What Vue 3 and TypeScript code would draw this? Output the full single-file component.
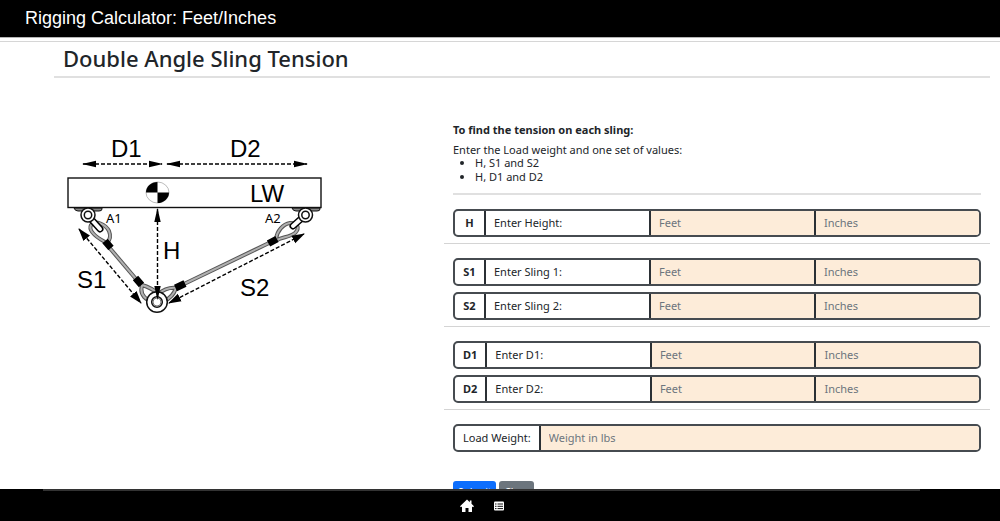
<script setup lang="ts">
import { reactive, ref } from 'vue'

interface Dimension {
  code: string
  label: string
  feet: string
  inches: string
}

const groups = reactive<Dimension[][]>([
  [{ code: 'H', label: 'Enter Height:', feet: '', inches: '' }],
  [
    { code: 'S1', label: 'Enter Sling 1:', feet: '', inches: '' },
    { code: 'S2', label: 'Enter Sling 2:', feet: '', inches: '' },
  ],
  [
    { code: 'D1', label: 'Enter D1:', feet: '', inches: '' },
    { code: 'D2', label: 'Enter D2:', feet: '', inches: '' },
  ],
])
const weight = ref('')

function clearAll() {
  groups.flat().forEach((d) => {
    d.feet = ''
    d.inches = ''
  })
  weight.value = ''
}
</script>

<template>
  <div class="app">
    <header class="topbar">Rigging Calculator: Feet/Inches</header>

    <main class="content">
      <div class="page">
        <h1 class="title">Double Angle Sling Tension</h1>
        <div class="columns">
          <div class="figure">
            <svg class="diagram" viewBox="60 130 270 190" role="img" aria-label="Double angle sling diagram">
              <defs>
                <marker id="arrow" markerUnits="userSpaceOnUse" markerWidth="14" markerHeight="8" refX="13" refY="4" orient="auto-start-reverse">
                  <path d="M0 0.8L14 4L0 7.2z" fill="#000" />
                </marker>
                <marker id="arrow-wide" markerUnits="userSpaceOnUse" markerWidth="13" markerHeight="10" refX="12" refY="5" orient="auto-start-reverse">
                  <path d="M0 0.8L13 5L0 9.2z" fill="#000" />
                </marker>
              </defs>

              <g class="plate">
                <path d="M74 208h28v1q0 2-3 2H78q-3 0-4-3z" />
                <path d="M292 208h28v1q0 2-3 2h-21q-3 0-4-3z" />
              </g>
              <rect class="beam" x="68" y="178" width="253" height="29.5" />
              <ellipse cx="157.500" cy="192.500" rx="11.500" ry="10.500" fill="#fff" stroke="#aaa" stroke-width="0.800" />
              <path d="M157.500 192.500V182a11.500 10.500 0 0 0-11.500 10.500zM157.500 192.500V203a11.500 10.500 0 0 0 11.500-10.500z" />

              <!-- wire rope legs -->
              <path class="rope" d="M108 246L136 279" />
              <path class="rope-core" d="M108 246L136 279" />
              <path class="rope" d="M184 284L269 243" />
              <path class="rope-core" d="M184 284L269 243" />
              <!-- eye loops -->
              <path class="loop" d="M105 242C96 237 88 231 91 225C95 219 106 225 109 231C111 236 110 240 107 243" />
              <path class="loop-core" d="M105 242C96 237 88 231 91 225C95 219 106 225 109 231C111 236 110 240 107 243" />
              <path class="loop" d="M276 239C277 231 283 224 290 223C298 223 300 228 295 233C290 237 283 237 277 240" />
              <path class="loop-core" d="M276 239C277 231 283 224 290 223C298 223 300 228 295 233C290 237 283 237 277 240" />
              <path class="loop" d="M142 285C140 292 143 297 148 300M142 285C149 287 154 290 159 294" />
              <path class="loop-core" d="M142 285C140 292 143 297 148 300M142 285C149 287 154 290 159 294" />
              <path class="loop" d="M176 288C170 287 161 290 156 296M176 288C174 294 169 299 164 301" />
              <path class="loop-core" d="M176 288C170 287 161 290 156 296M176 288C174 294 169 299 164 301" />
              <!-- ferrules -->
              <path class="ferrule" d="M105 241L111 248M135.500 278L141.500 285M175.500 288L185 283.500M268.500 243.500L277 239" />

              <!-- shackles -->
              <path class="pin-edge" d="M91 219L100 229" />
              <path class="pin" d="M91 219L100 229" />
              <path class="pin-edge" d="M302 218L293 226" />
              <path class="pin" d="M302 218L293 226" />
              <circle class="ring" cx="88" cy="215" r="7" />
              <circle class="ring" cx="88" cy="215" r="3.700" />
              <circle class="ring" cx="305.500" cy="215" r="7" />
              <circle class="ring" cx="305.500" cy="215" r="3.700" />
              <circle class="ring" cx="157" cy="302" r="10.300" />
              <circle class="ring" cx="157" cy="302" r="5.300" />
              <circle class="ring-inner" cx="157" cy="302" r="4" />

              <!-- measurements -->
              <g class="dash">
                <path d="M83 164H162" marker-start="url(#arrow)" marker-end="url(#arrow)" />
                <path d="M167 164H307" marker-start="url(#arrow)" marker-end="url(#arrow)" />
                <path d="M157.500 209V299" marker-start="url(#arrow)" marker-end="url(#arrow)" />
                <path d="M79 229L141 303" marker-start="url(#arrow-wide)" marker-end="url(#arrow-wide)" />
                <path d="M169 303L304 234" marker-start="url(#arrow-wide)" marker-end="url(#arrow-wide)" />
              </g>

              <g class="mark">
                <text x="111" y="157">D1</text>
                <text x="230" y="157">D2</text>
                <text x="250" y="202">LW</text>
                <text x="163" y="259">H</text>
                <text x="77" y="288">S1</text>
                <text x="240" y="296">S2</text>
              </g>
              <g class="mark-small">
                <text x="106" y="223">A1</text>
                <text x="265" y="223">A2</text>
              </g>
            </svg>
          </div>

          <form class="form" @submit.prevent>
            <section class="intro">
              <h2>To find the tension on each sling:</h2>
              <p>Enter the Load weight and one set of values:</p>
              <ul>
                <li>H, S1 and S2</li>
                <li>H, D1 and D2</li>
              </ul>
            </section>

            <section v-for="(group, i) in groups" :key="i" class="group">
              <div v-for="d in group" :key="d.code" class="field">
                <strong class="code">{{ d.code }}</strong>
                <label class="name" :for="'feet-' + d.code">{{ d.label }}</label>
                <input :id="'feet-' + d.code" v-model="d.feet" type="text" placeholder="Feet" />
                <input v-model="d.inches" type="text" placeholder="Inches" :aria-label="d.code + ' inches'" />
              </div>
            </section>

            <section class="group last">
              <div class="field">
                <label class="code" for="weight">Load Weight:</label>
                <input id="weight" v-model="weight" type="text" placeholder="Weight in lbs" />
              </div>
            </section>

            <div class="actions">
              <button class="primary" type="submit">Submit</button>
              <button class="secondary" type="button" @click="clearAll">Clear</button>
            </div>
          </form>
        </div>
      </div>
    </main>

    <footer class="bottombar">
      <div class="track"></div>
      <nav class="nav">
        <a href="#home" aria-label="Home">
          <svg width="14" height="14" viewBox="0 0 14 14"><path d="M7 0.500L0 7.200L1 8.200L2 7.500V13H5.500V9H8.500V13H12V7.500L13 8.200L14 7.200L11.500 4.800V1.500H9.800V3.200z" fill="#fff" /></svg>
        </a>
        <a href="#list" aria-label="List">
          <svg width="14" height="14" viewBox="0 0 14 14"><rect x="2" y="2.500" width="10" height="9" rx="1" fill="#fff" /><path d="M3 5h1.500M5.500 5H11M3 7.300h1.500M5.500 7.300H11M3 9.600h1.500M5.500 9.600H11" stroke="#111" stroke-width="1" /></svg>
        </a>
      </nav>
    </footer>
  </div>
</template>

<style>
body {
  margin: 0;
}
</style>

<style scoped>
* {
  box-sizing: border-box;
}
.app {
  display: flex;
  flex-direction: column;
  height: 100vh;
  background: #fff;
  color: #212529;
  font: 11px/14px "Noto Sans", "Open Sans", sans-serif;
}
.topbar {
  flex: none;
  padding: 8px 25px 9px;
  background: #000;
  color: #fff;
  font: 18px/20px "Liberation Sans", Arial, sans-serif;
}
.content {
  flex: 1;
  min-height: 0;
  overflow: hidden auto;
  scrollbar-width: none;
  border-top: 1px solid #b5b5b5;
}
.page {
  margin-top: 3px;
  padding: 0 10px 20px 54px;
  border-top: 1px solid #d6d6d6;
}
.title {
  margin: 0;
  padding: 0 9px 2px;
  border-bottom: 2px solid #e0e0e0;
  font-size: 22px;
  font-weight: 500;
  line-height: 32px;
}
.columns {
  display: grid;
  grid-template-columns: minmax(0, 5fr) minmax(0, 7fr);
}
.figure {
  padding: 52px 6px 0;
}
.diagram {
  display: block;
  width: 100%;
  max-width: 270px;
}
.beam {
  fill: #fff;
  stroke: #111;
  stroke-width: 1.4px;
}
.plate {
  fill: #888;
  stroke: #111;
}
.rope,
.loop {
  fill: none;
  stroke: #555;
  stroke-width: 4px;
}
.rope-core,
.loop-core {
  fill: none;
  stroke: #b0b0b0;
  stroke-width: 2px;
}
.ferrule {
  fill: none;
  stroke: #000;
  stroke-width: 7px;
}
.pin-edge {
  stroke: #000;
  stroke-width: 7px;
  stroke-linecap: round;
}
.pin {
  stroke: #fff;
  stroke-width: 4px;
  stroke-linecap: round;
}
.ring {
  fill: #fff;
  stroke: #111;
  stroke-width: 1.5px;
}
.ring-inner {
  fill: none;
  stroke: #777;
}
.dash {
  fill: none;
  stroke: #000;
  stroke-width: 1.4px;
  stroke-dasharray: 4 2;
}
.mark {
  font: 24px "Liberation Sans", Arial, sans-serif;
}
.mark-small {
  font: 13px "Noto Sans", sans-serif;
}
.form {
  padding-top: 45px;
}
.intro {
  margin: 0 9px;
  padding-bottom: 9px;
  border-bottom: 2px solid #e0e0e0;
}
.intro h2 {
  margin: 0 0 6px;
  font-size: 11px;
  font-weight: 700;
  line-height: 14px;
}
.intro p {
  margin: 0;
  line-height: 13px;
}
.intro ul {
  margin: 0;
  padding-left: 22px;
}
.group {
  display: grid;
  gap: 6px;
  padding: 14px 9px 6px;
  border-bottom: 1px solid #d4d4d4;
}
.group.last {
  border-bottom: 0;
}
.field {
  display: flex;
  height: 28px;
  overflow: hidden;
  border: 2px solid #464b50;
  border-radius: 5px;
}
.field > * {
  min-width: 0;
  line-height: 24px;
}
.field > * + * {
  border: 0;
  border-left: 2px solid #2b3035;
}
.field > .code {
  flex: none;
  min-width: 29px;
  padding: 0 8px;
  text-align: center;
}
.name,
.field input {
  flex: 1 1 0;
  padding: 0 8px;
}
.field input {
  border-radius: 0;
  background: #fdecd9;
  color: inherit;
  font: inherit;
  outline-offset: -2px;
}
.field input::placeholder {
  color: #6c757d;
  opacity: 1;
}
.actions {
  display: flex;
  gap: 3px;
  padding: 23px 9px 0;
}
.actions button {
  padding: 4px 5px;
  border: 0;
  border-radius: 3px;
  color: #fff;
  font: 10px/14px "Noto Sans", "Open Sans", sans-serif;
}
.primary {
  background: #0d6efd;
}
.secondary {
  background: #6c757d;
}
.bottombar {
  flex: none;
  height: 32px;
  background: #000;
}
.track {
  height: 2px;
  margin: 0 80px 0 43px;
  background: #333;
}
.nav {
  display: flex;
  justify-content: center;
  gap: 18px;
  padding: 8px 34px 0 0;
}
.nav a {
  display: block;
  height: 14px;
}
</style>
